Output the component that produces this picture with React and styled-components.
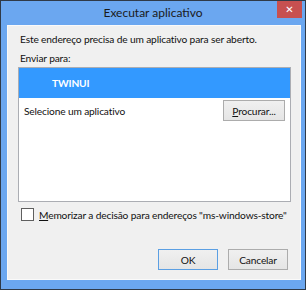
import React from 'react';
import styled, { createGlobalStyle } from 'styled-components';

const GlobalStyle = createGlobalStyle`
  html, body {
    margin: 0;
    padding: 0;
    background: #ffffff;
  }
  body {
    font-family: Lato, "Liberation Sans", sans-serif;
  }
`;

const Window = styled.div`
  width: 306px;
  height: 290px;
  box-sizing: border-box;
  border: 1px solid #2f3a48;
  background: #6ba7f0;
  display: flex;
  flex-direction: column;
`;

const TitleBar = styled.div`
  height: 24px;
  display: grid;
  grid-template-columns: 1fr auto 1fr;
  align-items: start;
`;

const Title = styled.div`
  grid-column: 2;
  line-height: 24px;
  font-size: 12px;
  color: #1a1a1a;
`;

const CloseButton = styled.div`
  grid-column: 3;
  justify-self: end;
  width: 25px;
  height: 17px;
  margin-right: 3px;
  background: #c75050;
  color: #ffffff;
  font-family: "DejaVu Sans", sans-serif;
  font-size: 10px;
  font-weight: bold;
  display: flex;
  align-items: center;
  justify-content: center;
`;

const Client = styled.div`
  flex: 1;
  margin: 0 4px 9px 6px;
  background: #f0f0f0;
  border: 1px solid #fafafa;
  display: flex;
  flex-direction: column;
  padding: 6px 9px 9px 10px;
  font-size: 10.2px;
  letter-spacing: -0.15px;
  color: #111111;
`;

const Line = styled.div`
  line-height: 14px;
  margin: ${(p) => p.$top || 0}px 0 0 2px;
`;

const ListBox = styled.div`
  margin-top: 2px;
  height: 135px;
  box-sizing: border-box;
  border: 1px solid #abadb3;
  background: #ffffff;
  display: flex;
  flex-direction: column;
`;

const SelectedRow = styled.div`
  height: 30px;
  background: #3399ff;
  color: #ffffff;
  font-weight: bold;
  display: flex;
  align-items: center;
  padding-left: 33px;
`;

const PickRow = styled.div`
  display: flex;
  align-items: center;
  justify-content: space-between;
  padding: 2px 5px 0 5px;
`;

const Button = styled.div`
  width: ${(p) => p.$w || 60}px;
  height: 21px;
  box-sizing: border-box;
  border: 1px solid ${(p) => (p.$default ? '#5b9fe3' : '#acacac')};
  background: linear-gradient(#f0f0f0, #e5e5e5);
  display: flex;
  align-items: center;
  justify-content: center;
  color: #111111;
`;

const CheckRow = styled.div`
  margin-top: 6px;
  display: flex;
  align-items: center;
  gap: 5px;
  padding-left: 3px;
`;

const CheckBox = styled.div`
  width: 13px;
  height: 13px;
  box-sizing: border-box;
  border: 1px solid #5f5f5f;
  background: #ffffff;
`;

const ButtonRow = styled.div`
  margin-top: auto;
  display: flex;
  justify-content: flex-end;
  gap: 10px;
  padding-right: 3px;
`;

export default function App() {
  return (
    <>
      <GlobalStyle />
      <Window>
        <TitleBar>
          <Title>Executar aplicativo</Title>
          <CloseButton>✕</CloseButton>
        </TitleBar>
        <Client>
          <Line>Este endereço precisa de um aplicativo para ser aberto.</Line>
          <Line $top={5}>Enviar para:</Line>
          <ListBox>
            <SelectedRow>TWINUI</SelectedRow>
            <PickRow>
              <span>Selecione um aplicativo</span>
              <Button $w={62}>
                <span>
                  <u>P</u>rocurar...
                </span>
              </Button>
            </PickRow>
          </ListBox>
          <CheckRow>
            <CheckBox />
            <span>
              <u>M</u>emorizar a decisão para endereços "ms-windows-store"
            </span>
          </CheckRow>
          <ButtonRow>
            <Button $default>OK</Button>
            <Button>Cancelar</Button>
          </ButtonRow>
        </Client>
      </Window>
    </>
  );
}
